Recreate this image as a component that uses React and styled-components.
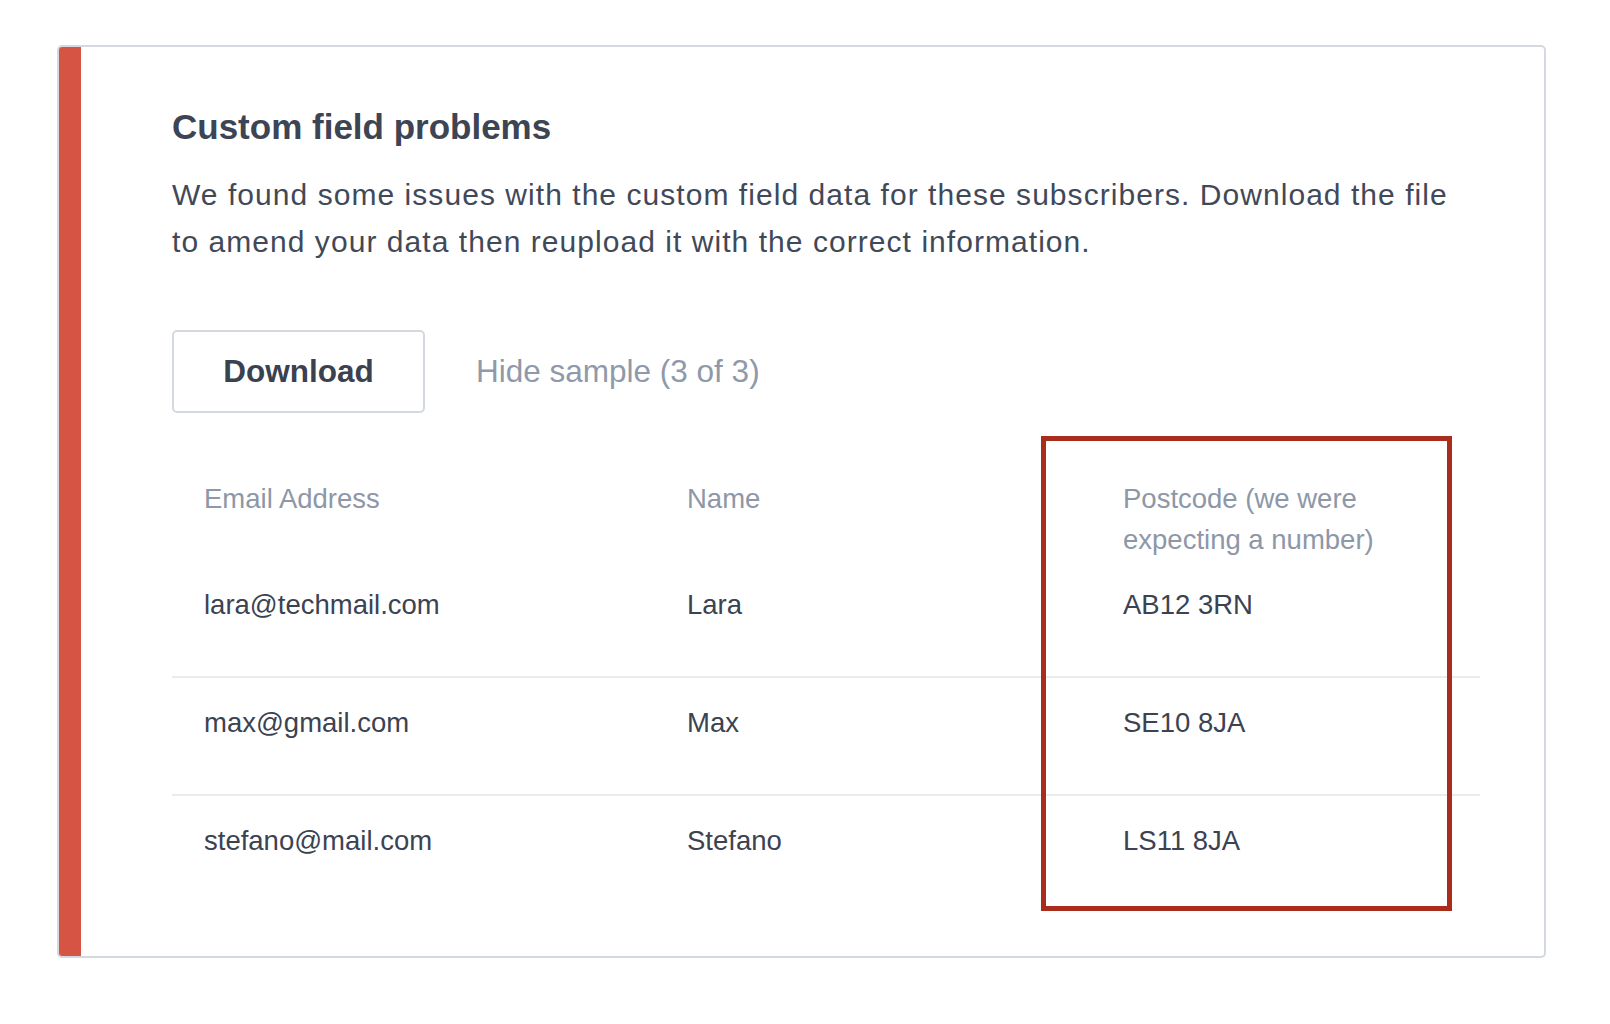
import React from 'react'
import styled, { createGlobalStyle } from 'styled-components';

const GlobalStyle = createGlobalStyle`
    html, body {
        margin:0;
        padding:0;
        background:#ffffff;
    }
    body {
        font-family:"Liberation Sans", Arial, Helvetica, sans-serif;
        color:#3d4453;
    }
`;

const Page = styled.main`
    padding:45px 0 0 57px;
`;

const Card = styled.section`
    width:1489px;
    box-sizing:border-box;
    display:flex;
    border:2px solid #d4d9df;
    border-radius:5px;
    overflow:hidden;
    background:#ffffff;
`;

const Accent = styled.div`
    width:22px;
    flex:none;
    background-color:#d55444;
`;

const Content = styled.div`
    flex:1;
    padding:59px 64px 44px 91px;
`;

const Title = styled.h2`
    margin:0;
    font-size:35px;
    line-height:42px;
    font-weight:700;
    color:#3d4453;
`;

const Description = styled.p`
    margin:23px 0 0;
    max-width:1290px;
    font-size:30px;
    line-height:47px;
    letter-spacing:1.05px;
    color:#414958;
`;

const Actions = styled.div`
    margin-top:65px;
    display:flex;
    align-items:center;
    gap:51px;
`;

const DownloadButton = styled.button`
    width:253px;
    height:83px;
    box-sizing:border-box;
    border:2px solid #d4d9e0;
    border-radius:5px;
    background:#ffffff;
    font-family:inherit;
    font-size:31.5px;
    font-weight:700;
    color:#3a4150;
    cursor:pointer;
`;

const ToggleLink = styled.span`
    font-size:31.5px;
    color:#8f99aa;
    cursor:pointer;
`;

const Table = styled.div`
    position:relative;
    margin-top:41px;
`;

const Row = styled.div`
    display:grid;
    grid-template-columns:483px 436px 1fr;
    border-top:${props=>props.divided?'2px solid #e9ebf0':'none'};
`;

const Cell = styled.div`
    padding:${props=>props.head?'24px 32px 0':'24px 32px 51px'};
    font-size:27.5px;
    line-height:41px;
    color:${props=>props.head?'#8d97a8':'#3b4352'};
`;

const Highlight = styled.div`
    position:absolute;
    left:869px;
    top:-18px;
    width:411px;
    height:475px;
    box-sizing:border-box;
    border:5px solid #a92d1c;
    pointer-events:none;
`;

const COLUMNS = ['Email Address','Name','Postcode (we were expecting a number)'];

const SUBSCRIBERS = [
    {email:'lara@techmail.com',name:'Lara',postcode:'AB12 3RN'},
    {email:'max@gmail.com',name:'Max',postcode:'SE10 8JA'},
    {email:'stefano@mail.com',name:'Stefano',postcode:'LS11 8JA'}
];

const App = () => {
    return(
        <>
            <GlobalStyle/>
            <Page>
                <Card>
                    <Accent/>
                    <Content>
                        <Title>Custom field problems</Title>
                        <Description>
                            We found some issues with the custom field data for these subscribers. Download the file to amend your data then reupload it with the correct information.
                        </Description>
                        <Actions>
                            <DownloadButton>Download</DownloadButton>
                            <ToggleLink>Hide sample (3 of 3)</ToggleLink>
                        </Actions>
                        <Table>
                            <Row>
                                {COLUMNS.map(col=>(
                                    <Cell head key={col}>{col}</Cell>
                                ))}
                            </Row>
                            {SUBSCRIBERS.map((row,index)=>(
                                <Row key={row.email} divided={index>0}>
                                    <Cell>{row.email}</Cell>
                                    <Cell>{row.name}</Cell>
                                    <Cell>{row.postcode}</Cell>
                                </Row>
                            ))}
                            <Highlight/>
                        </Table>
                    </Content>
                </Card>
            </Page>
        </>
    );
}

export default App;
